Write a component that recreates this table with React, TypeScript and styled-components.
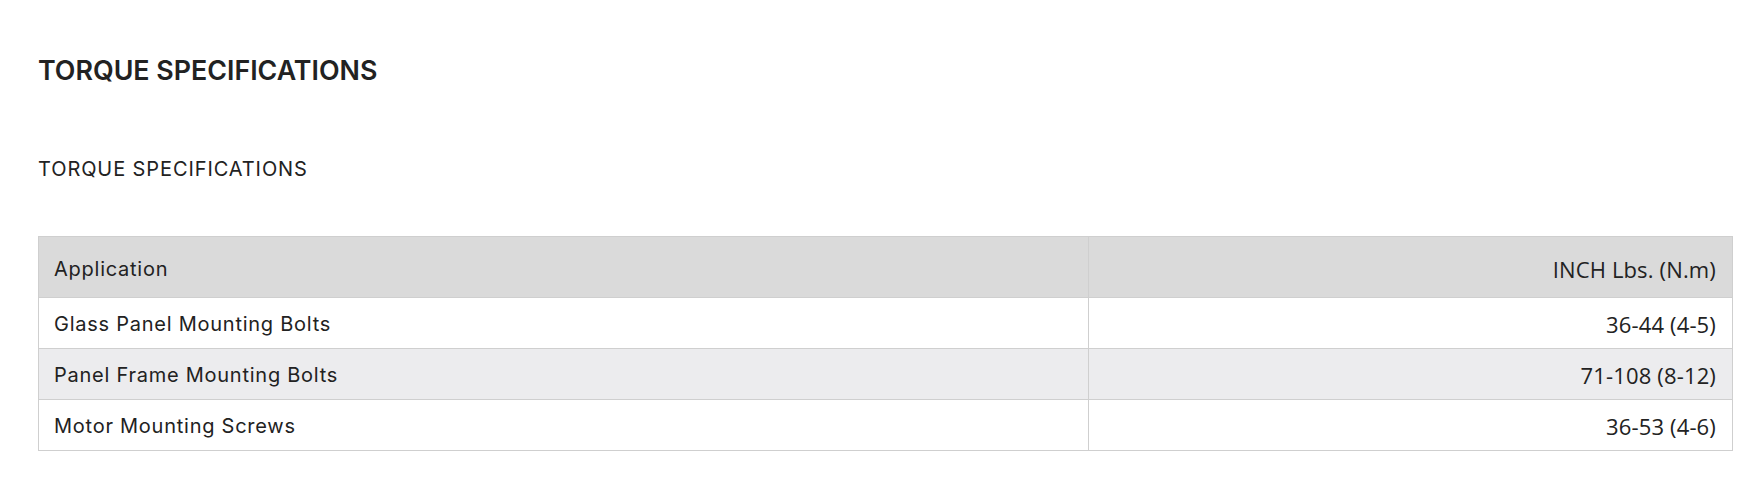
import React from "react";
import styled, { createGlobalStyle } from "styled-components";

const Global = createGlobalStyle`
  html, body { margin: 0; padding: 0; background: #fff; }
  body { font-family: Inter, sans-serif; color: #222; }
`;

const Page = styled.div`
  padding: 54px 25px 0 38px;
`;

const Title = styled.h2`
  margin: 0;
  font-family: Inter, sans-serif;
  font-weight: 600;
  font-size: 26.8px;
  line-height: 32px;
  color: #222;
`;

const Subtitle = styled.p`
  margin: 71px 0 0;
  font-family: Inter, sans-serif;
  font-weight: 400;
  font-size: 20px;
  letter-spacing: 0.9px;
  line-height: 24px;
  color: #222;
`;

const Table = styled.table`
  margin-top: 55px;
  width: 100%;
  table-layout: fixed;
  border-collapse: collapse;
  border: 1px solid #cfcfcf;
`;

const FirstCol = styled.col`
  width: 1050px;
`;

const Row = styled.tr<{ $shade?: "head" | "odd" | "even" }>`
  background: ${(p) =>
    p.$shade === "head" ? "#dadada" : p.$shade === "even" ? "#ececee" : "#fff"};
`;

const Cell = styled.td<{ $right?: boolean; $head?: boolean }>`
  border: 1px solid #cfcfcf;
  padding: ${(p) => (p.$head ? "3px" : "2px")} 16px 0 15px;
  height: ${(p) => (p.$head ? "57px" : "48px")};
  text-align: ${(p) => (p.$right ? "right" : "left")};
  font-family: ${(p) => (p.$right ? '"Open Sans", sans-serif' : "Inter, sans-serif")};
  font-size: ${(p) => (p.$right ? "22px" : "20px")};
  letter-spacing: ${(p) => (p.$right ? "0.15px" : "0.75px")};
  color: #222;
  vertical-align: middle;
`;

const rows = [
  ["Glass Panel Mounting Bolts", "36-44 (4-5)"],
  ["Panel Frame Mounting Bolts", "71-108 (8-12)"],
  ["Motor Mounting Screws", "36-53 (4-6)"],
];

export default function App() {
  return (
    <>
      <Global />
      <Page>
        <Title>TORQUE SPECIFICATIONS</Title>
        <Subtitle>TORQUE SPECIFICATIONS</Subtitle>
        <Table>
          <colgroup>
            <FirstCol />
            <col />
          </colgroup>
          <tbody>
            <Row $shade="head">
              <Cell $head>Application</Cell>
              <Cell $head $right>INCH Lbs. (N.m)</Cell>
            </Row>
            {rows.map(([a, b], i) => (
              <Row key={a} $shade={i % 2 === 1 ? "even" : "odd"}>
                <Cell>{a}</Cell>
                <Cell $right>{b}</Cell>
              </Row>
            ))}
          </tbody>
        </Table>
      </Page>
    </>
  );
}
